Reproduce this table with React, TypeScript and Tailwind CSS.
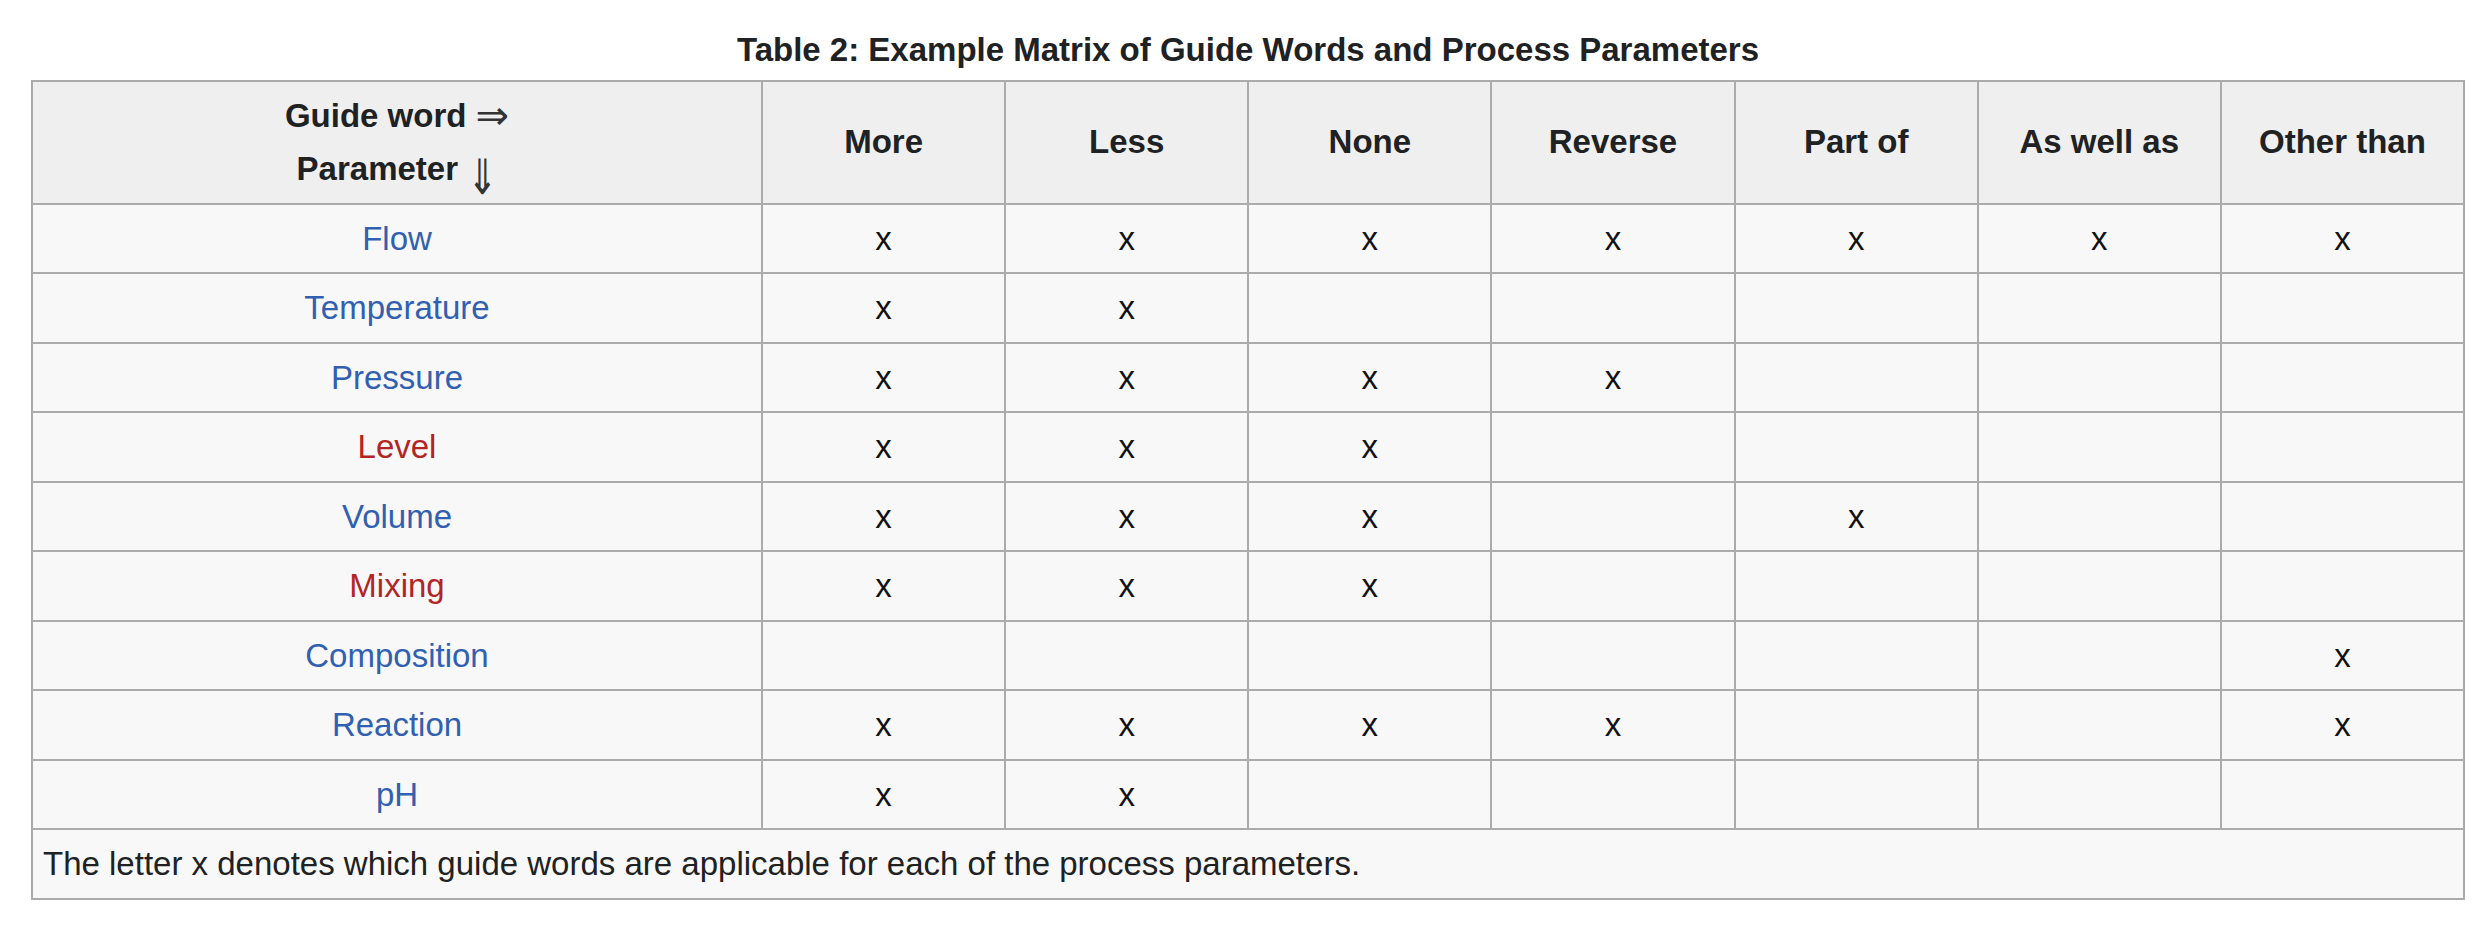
import React from "react";

const cols = ["More", "Less", "None", "Reverse", "Part of", "As well as", "Other than"];

type Row = { name: string; red?: boolean; marks: number[] };

const rows: Row[] = [
  { name: "Flow", marks: [0, 1, 2, 3, 4, 5, 6] },
  { name: "Temperature", marks: [0, 1] },
  { name: "Pressure", marks: [0, 1, 2, 3] },
  { name: "Level", red: true, marks: [0, 1, 2] },
  { name: "Volume", marks: [0, 1, 2, 4] },
  { name: "Mixing", red: true, marks: [0, 1, 2] },
  { name: "Composition", marks: [6] },
  { name: "Reaction", marks: [0, 1, 2, 3, 6] },
  { name: "pH", marks: [0, 1] },
];

export default function App() {
  return (
    <div
      className="min-h-[934px] w-[2492px] bg-white pt-[23px] text-[#202122]"
      style={{ fontFamily: '"Liberation Sans", Arial, "DejaVu Sans", sans-serif' }}
    >
      <table className="ml-[31px] w-[2434px] table-fixed border-collapse text-[33px] leading-[53.5px]">
        <caption className="pb-[3px] text-center font-bold">
          Table 2: Example Matrix of Guide Words and Process Parameters
        </caption>
        <colgroup>
          <col className="w-[730px]" />
          {cols.map((c) => (
            <col key={c} />
          ))}
        </colgroup>
        <thead>
          <tr className="bg-[#efeff0]">
            <th className="border-2 border-[#ababab] px-[13px] py-[7px] text-center font-bold">
              <div className="h-[53.5px]">
                Guide word{" "}
                <span
                  className="inline-block align-[-2px] text-[40px] leading-none font-normal text-[#333]"
                  style={{ fontFamily: '"DejaVu Sans", sans-serif' }}
                >
                  ⇒
                </span>
              </div>
              <div className="h-[53.5px]">
                Parameter{" "}
                <span
                  className="inline-block scale-y-[1.35] align-[-10px] text-[36px] leading-none font-normal text-[#333]"
                  style={{ fontFamily: '"DejaVu Sans", sans-serif' }}
                >
                  ⇓
                </span>
              </div>
            </th>
            {cols.map((c) => (
              <th
                key={c}
                className="border-2 border-[#ababab] px-[13px] py-[7px] text-center font-bold whitespace-nowrap"
              >
                {c}
              </th>
            ))}
          </tr>
        </thead>
        <tbody>
          {rows.map((r) => (
            <tr key={r.name} className="bg-[#f8f8f9]">
              <td
                className={
                  "border-2 border-[#ababab] px-[13px] py-[7px] text-center " +
                  (r.red ? "text-[#b32424]" : "text-[#3160b0]")
                }
              >
                {r.name}
              </td>
              {cols.map((c, i) => (
                <td
                  key={c}
                  className="border-2 border-[#ababab] px-[13px] py-[7px] text-center text-[#111]"
                >
                  {r.marks.includes(i) ? "x" : ""}
                </td>
              ))}
            </tr>
          ))}
          <tr className="bg-[#f8f8f9]">
            <td colSpan={8} className="border-2 border-[#ababab] px-[10px] py-[7px] text-left">
              The letter x denotes which guide words are applicable for each of the process parameters.
            </td>
          </tr>
        </tbody>
      </table>
    </div>
  );
}
